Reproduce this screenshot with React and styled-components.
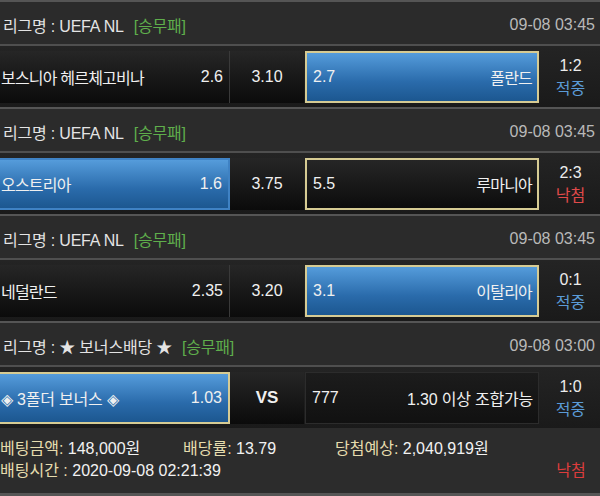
import React from "react";
import styled, { createGlobalStyle, css } from "styled-components";

const GlobalStyle = createGlobalStyle`
  html, body {
    margin: 0;
    padding: 0;
    background: #2b2b2b;
    width: 600px;
    height: 496px;
    overflow: hidden;
  }
  body {
    font-family: "Liberation Sans", "Noto Sans CJK KR", sans-serif;
    font-size: 16px;
    color: #ececec;
  }
`;

const Page = styled.div`
  width: 600px;
  height: 496px;
  display: flex;
  flex-direction: column;
  background: #2b2b2b;
`;

const Section = styled.section`
  border-top: 2px solid #555;
`;

const LeagueHeader = styled.div`
  height: 42px;
  padding: 4px 5px 0 3px;
  box-sizing: border-box;
  display: flex;
  align-items: center;
  justify-content: space-between;
  background: #2b2b2b;
`;

const LeagueName = styled.span`
  color: #e4e4e4;
  letter-spacing: -0.2px;
`;

const Tag = styled.span`
  color: #5fae4c;
  margin-left: 10px;
`;

const Time = styled.span`
  color: #b9b9b9;
`;

const MatchRow = styled.div`
  height: 63px;
  box-sizing: border-box;
  border-top: 2px solid #4f4f4f;
  padding: 5px 0 4px;
  display: flex;
  background: linear-gradient(#242424, #1a1a1a);
`;

const boxBase = css`
  box-sizing: border-box;
  height: 100%;
  display: flex;
  align-items: center;
  justify-content: space-between;
  color: #f0f0f0;
`;

const variantStyles = ({ $won, $picked, $muted }) => {
  if ($won) {
    return css`
      background: linear-gradient(#559cdb, #2a6bab 60%, #1c5790);
      border: 2px solid ${$picked ? "#d6cb93" : "#3f82c4"};
    `;
  }
  if ($picked) {
    return css`
      background: linear-gradient(#262626, #0c0c0c);
      border: 2px solid #d6cb93;
    `;
  }
  if ($muted) {
    return css`
      background: linear-gradient(#1c1c1c, #111);
      border: 1px solid #2c2c2c;
    `;
  }
  return css`
    background: linear-gradient(#262626, #0b0b0b);
    border-right: 1px solid #3a3a3a;
  `;
};

const HomeCell = styled.div`
  ${boxBase}
  width: 230px;
  padding: 0 6px 0 1px;
  ${variantStyles}
  border-left: none;
`;

const DrawCell = styled.div`
  ${boxBase}
  width: 74px;
  justify-content: center;
  background: linear-gradient(#262626, #0b0b0b);
  font-weight: ${(p) => (p.$vs ? 700 : 400)};
  font-size: ${(p) => (p.$vs ? "17px" : "16px")};
`;

const AwayCell = styled.div`
  ${boxBase}
  width: 234px;
  margin-left: 1px;
  padding: 0 5px 0 6px;
  ${variantStyles}
`;

const Odds = styled.span``;

const TeamName = styled.span`
  letter-spacing: ${(p) => (p.$tight ? "-0.8px" : "-0.2px")};
  white-space: nowrap;
`;

const ResultCell = styled.div`
  flex: 1;
  display: flex;
  flex-direction: column;
  align-items: center;
  justify-content: center;
  gap: 2px;
  padding-left: 2px;
  line-height: 21px;
`;

const Score = styled.span`
  color: #ececec;
`;

const Verdict = styled.span`
  color: ${(p) => (p.$win ? "#5b9bd7" : "#e04a4a")};
`;

const Footer = styled.div`
  flex: 1;
  display: grid;
  grid-template-columns: 183px 152px 1fr;
  grid-auto-rows: 22px;
  align-content: start;
  align-items: center;
  padding-top: 8px;
  border-bottom: 3px solid #555;
  background: #2c2c2c;
`;

const Info = styled.span`
  color: #f2f2f2;
  white-space: nowrap;
  grid-column: ${(p) => p.$span || "auto"};
`;

const Label = styled.span`
  color: #e6dcae;
`;

const FinalVerdict = styled.span`
  grid-column: 3;
  justify-self: end;
  width: 58px;
  text-align: center;
  color: #dd3c3c;
`;

const matches = [
  {
    league: "UEFA NL",
    time: "09-08 03:45",
    home: "보스니아 헤르체고비나",
    homeOdds: "2.6",
    draw: "3.10",
    away: "폴란드",
    awayOdds: "2.7",
    won: "away",
    picked: "away",
    score: "1:2",
    hit: true,
  },
  {
    league: "UEFA NL",
    time: "09-08 03:45",
    home: "오스트리아",
    homeOdds: "1.6",
    draw: "3.75",
    away: "루마니아",
    awayOdds: "5.5",
    won: "home",
    picked: "away",
    score: "2:3",
    hit: false,
  },
  {
    league: "UEFA NL",
    time: "09-08 03:45",
    home: "네덜란드",
    homeOdds: "2.35",
    draw: "3.20",
    away: "이탈리아",
    awayOdds: "3.1",
    won: "away",
    picked: "away",
    score: "0:1",
    hit: true,
  },
  {
    league: "★ 보너스배당 ★",
    time: "09-08 03:00",
    home: "◈ 3폴더 보너스 ◈",
    homeOdds: "1.03",
    draw: "VS",
    vs: true,
    away: "1.30 이상 조합가능",
    awayOdds: "777",
    won: "home",
    picked: "home",
    score: "1:0",
    hit: true,
    mutedAway: true,
    loose: true,
  },
];

export default function App() {
  return (
    <>
      <GlobalStyle />
      <Page>
        {matches.map((m, i) => (
          <Section key={i}>
            <LeagueHeader>
              <LeagueName>
                리그명 : {m.league}
                <Tag>[승무패]</Tag>
              </LeagueName>
              <Time>{m.time}</Time>
            </LeagueHeader>
            <MatchRow>
              <HomeCell $won={m.won === "home"} $picked={m.picked === "home"}>
                <TeamName $tight={!m.loose}>{m.home}</TeamName>
                <Odds>{m.homeOdds}</Odds>
              </HomeCell>
              <DrawCell $vs={m.vs}>{m.draw}</DrawCell>
              <AwayCell
                $won={m.won === "away"}
                $picked={m.picked === "away"}
                $muted={m.mutedAway}
              >
                <Odds>{m.awayOdds}</Odds>
                <TeamName $tight={!m.loose}>{m.away}</TeamName>
              </AwayCell>
              <ResultCell>
                <Score>{m.score}</Score>
                <Verdict $win={m.hit}>{m.hit ? "적중" : "낙첨"}</Verdict>
              </ResultCell>
            </MatchRow>
          </Section>
        ))}
        <Footer>
          <Info>
            <Label>베팅금액:</Label> 148,000원
          </Info>
          <Info>
            <Label>배당률:</Label> 13.79
          </Info>
          <Info>
            <Label>당첨예상:</Label> 2,040,919원
          </Info>
          <Info $span="1 / span 2">
            <Label>배팅시간 :</Label> 2020-09-08 02:21:39
          </Info>
          <FinalVerdict>낙첨</FinalVerdict>
        </Footer>
      </Page>
    </>
  );
}
